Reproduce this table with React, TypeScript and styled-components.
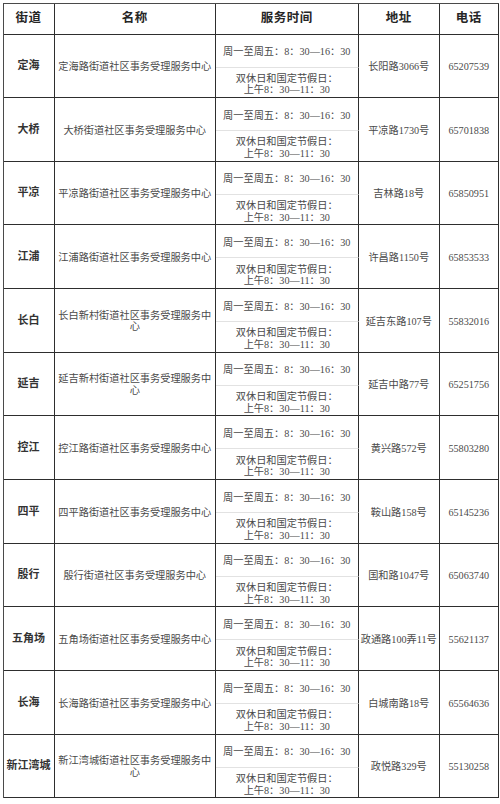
import styled, { createGlobalStyle } from "styled-components";

const GlobalStyle = createGlobalStyle`
  html, body {
    margin: 0;
    padding: 0;
    background: #fff;
  }
  body {
    font-family: "Liberation Serif", "Noto Sans CJK SC", serif;
  }
`;

type Office = {
  street: string;
  name: string;
  address: string;
  phone: string;
};

const offices: Office[] = [
  { street: "定海", name: "定海路街道社区事务受理服务中心", address: "长阳路3066号", phone: "65207539" },
  { street: "大桥", name: "大桥街道社区事务受理服务中心", address: "平凉路1730号", phone: "65701838" },
  { street: "平凉", name: "平凉路街道社区事务受理服务中心", address: "吉林路18号", phone: "65850951" },
  { street: "江浦", name: "江浦路街道社区事务受理服务中心", address: "许昌路1150号", phone: "65853533" },
  { street: "长白", name: "长白新村街道社区事务受理服务中心", address: "延吉东路107号", phone: "55832016" },
  { street: "延吉", name: "延吉新村街道社区事务受理服务中心", address: "延吉中路77号", phone: "65251756" },
  { street: "控江", name: "控江路街道社区事务受理服务中心", address: "黄兴路572号", phone: "55803280" },
  { street: "四平", name: "四平路街道社区事务受理服务中心", address: "鞍山路158号", phone: "65145236" },
  { street: "殷行", name: "殷行街道社区事务受理服务中心", address: "国和路1047号", phone: "65063740" },
  { street: "五角场", name: "五角场街道社区事务受理服务中心", address: "政通路100弄11号", phone: "55621137" },
  { street: "长海", name: "长海路街道社区事务受理服务中心", address: "白城南路18号", phone: "65564636" },
  { street: "新江湾城", name: "新江湾城街道社区事务受理服务中心", address: "政悦路329号", phone: "55130258" },
];

export default function App() {
  return (
    <>
      <GlobalStyle />
      <Sheet>
        <HeadCell $col={1}>街道</HeadCell>
        <HeadCell $col={2}>名称</HeadCell>
        <HeadCell $col={3}>服务时间</HeadCell>
        <HeadCell $col={4}>地址</HeadCell>
        <HeadCell $col={5}>电话</HeadCell>
        {offices.map((o, i) => {
          const row = 2 + i * 2;
          return (
            <Row key={o.street}>
              <StreetCell $row={row}>{o.street}</StreetCell>
              <NameCell $row={row}>{o.name}</NameCell>
              <TimeCell $row={row} $part="weekday">
                周一至周五：8：30—16：30
              </TimeCell>
              <TimeCell $row={row + 1} $part="holiday">
                <span>双休日和国定节假日：</span>
                <span>上午8：30—11：30</span>
              </TimeCell>
              <InfoCell $row={row} $col={4}>
                {o.address}
              </InfoCell>
              <InfoCell $row={row} $col={5}>
                {o.phone}
              </InfoCell>
            </Row>
          );
        })}
      </Sheet>
    </>
  );
}

const Sheet = styled.div`
  display: grid;
  grid-template-columns: 51px 161.5px 142.5px 81.5px 58.5px;
  grid-template-rows: 31px repeat(12, 33px 30.67px);
  margin: 2.5px 0 0 2.5px;
  width: max-content;
  border-top: 1.5px solid #4a4a4a;
  border-left: 1.5px solid #4a4a4a;
  color: #4a4a4a;
`;

const Row = styled.div`
  display: contents;
`;

const Cell = styled.div`
  box-sizing: border-box;
  min-width: 0;
  border-right: 1.5px solid #2e2e2e;
  border-bottom: 1.5px solid #2e2e2e;
  display: flex;
  align-items: center;
  justify-content: center;
  text-align: center;
  font-size: 10.2px;
  line-height: 11.7px;
  padding: 0 3px;
`;

const HeadCell = styled(Cell)<{ $col: number }>`
  grid-row: 1;
  grid-column: ${(p) => p.$col};
  font-size: 12.5px;
  font-weight: bold;
  color: #262626;
  letter-spacing: 0.5px;
`;

const StreetCell = styled(Cell)<{ $row: number }>`
  grid-column: 1;
  grid-row: ${(p) => p.$row} / span 2;
  font-size: 11px;
  font-weight: bold;
  color: #333;
  padding: 0;
`;

const NameCell = styled(Cell)<{ $row: number }>`
  grid-column: 2;
  grid-row: ${(p) => p.$row} / span 2;
  padding: 2px 3px 0;
`;

const InfoCell = styled(Cell)<{ $row: number; $col: number }>`
  grid-column: ${(p) => p.$col};
  grid-row: ${(p) => p.$row} / span 2;
  padding: 2px 2px 0;
  white-space: nowrap;
`;

const TimeCell = styled(Cell)<{ $row: number; $part: "weekday" | "holiday" }>`
  grid-column: 3;
  grid-row: ${(p) => p.$row};
  flex-direction: column;
  padding: ${(p) => (p.$part === "weekday" ? "3px 0 0" : "4px 0 0")};
  white-space: nowrap;
  border-bottom: ${(p) =>
    p.$part === "weekday" ? "1px solid #e2e2e2" : "1.5px solid #2e2e2e"};
`;
